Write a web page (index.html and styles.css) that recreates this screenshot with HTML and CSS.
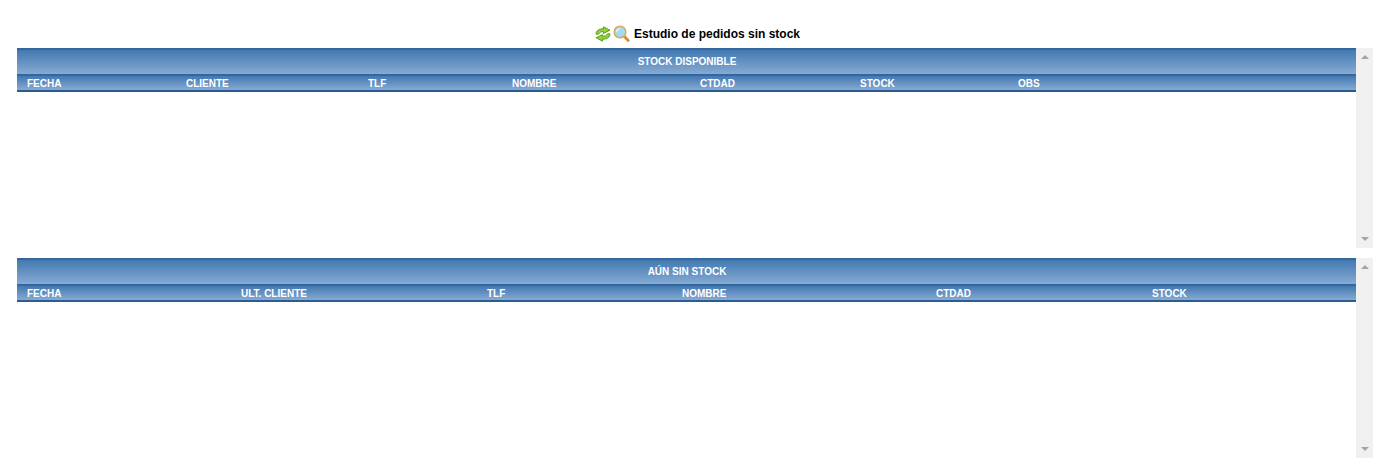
FILE: index.html
```html
<!DOCTYPE html>
<html lang="es">
<head>
<meta charset="utf-8">
<title>Estudio de pedidos sin stock</title>
<link rel="stylesheet" href="styles.css">
</head>
<body>
<div class="page">
  <h1 class="title">
    <svg class="icon" viewBox="0 0 16 16" width="16" height="16" aria-hidden="true">
      <path d="M1 8.2C1 4.8 3.8 2.6 8.5 2.8V.8L15 4.2 8.5 7.4V5.7C6 5.6 4.5 6.3 3.5 8.2Z" fill="#97d034" stroke="#4f9a1e" stroke-width=".9" stroke-linejoin="round"/>
      <path d="M15 7.8C15 11.2 12.2 13.4 7.5 13.2V15.2L1 11.8 7.5 8.6V10.3C10 10.4 11.5 9.7 12.5 7.8Z" fill="#97d034" stroke="#4f9a1e" stroke-width=".9" stroke-linejoin="round"/>
    </svg>
    <svg class="icon" viewBox="0 0 17 17" width="17" height="17" aria-hidden="true">
      <path d="M11.4 11.6 15.2 15.4" stroke="#d98a2b" stroke-width="2.8" stroke-linecap="round"/>
      <circle cx="7" cy="7" r="5.8" fill="#a6daf2" stroke="#dcaa58" stroke-width="1.5"/>
      <path d="M3.6 6.8C3.8 5 5.2 3.8 7 3.6" fill="none" stroke="#e9f8ff" stroke-width="1.3"/>
    </svg>
    <span class="title-text">Estudio de pedidos sin stock</span>
  </h1>

  <section class="panel">
    <div class="panel-main">
      <div class="band">STOCK DISPONIBLE</div>
      <div class="cols cols-stock">
        <span>FECHA</span><span>CLIENTE</span><span>TLF</span><span>NOMBRE</span><span>CTDAD</span><span>STOCK</span><span>OBS</span>
      </div>
    </div>
    <div class="scrollbar"><i class="arrow-up"></i><i class="arrow-down"></i></div>
  </section>

  <section class="panel">
    <div class="panel-main">
      <div class="band">AÚN SIN STOCK</div>
      <div class="cols cols-nostock">
        <span>FECHA</span><span>ULT. CLIENTE</span><span>TLF</span><span>NOMBRE</span><span>CTDAD</span><span>STOCK</span>
      </div>
    </div>
    <div class="scrollbar"><i class="arrow-up"></i><i class="arrow-down"></i></div>
  </section>
</div>
</body>
</html>
```
FILE: styles.css
```css
html, body {
  margin: 0;
  padding: 0;
  background: #fff;
}
body {
  font-family: "Liberation Sans", Arial, sans-serif;
}
.page {
  padding: 25px 23px 0 17px;
}
.title {
  margin: 0 -23px 6px -17px;
  height: 17px;
  display: flex;
  justify-content: center;
  align-items: center;
  gap: 2px;
  font-size: 12px;
  font-weight: bold;
  color: #000;
}
.title-text {
  margin: 0 1px 0 2px;
}
.icon {
  display: block;
  flex: none;
}
.panel {
  height: 200px;
  display: flex;
}
.panel + .panel {
  margin-top: 10px;
}
.panel-main {
  flex: 1;
  min-width: 0;
}
.band {
  height: 26px;
  box-sizing: border-box;
  display: flex;
  align-items: center;
  justify-content: center;
  padding: 0 0 1px 1px;
  border-top: 2px solid #33689f;
  background: linear-gradient(#4379b1, #86aad3);
  color: #fff;
  font-size: 10px;
  font-weight: bold;
}
.cols {
  height: 18px;
  box-sizing: border-box;
  display: grid;
  align-items: center;
  border-top: 2px solid #33689f;
  border-bottom: 2px solid #2a5d94;
  background: linear-gradient(#4379b1, #86aad3);
  color: #fff;
  font-size: 10px;
  font-weight: bold;
}
.cols span {
  padding-left: 10px;
}
.cols-stock {
  grid-template-columns: 159px 182px 144px 188px 160px 158px 1fr;
}
.cols-nostock {
  grid-template-columns: 214px 246px 195px 254px 216px 1fr;
}
.scrollbar {
  width: 17px;
  background: #f0f0f0;
  display: flex;
  flex-direction: column;
  justify-content: space-between;
  align-items: center;
  padding: 7px 0;
  box-sizing: border-box;
}
.arrow-up, .arrow-down {
  display: block;
  width: 0;
  height: 0;
  border-left: 4px solid transparent;
  border-right: 4px solid transparent;
}
.arrow-up {
  border-bottom: 4px solid #a3a3a3;
}
.arrow-down {
  border-top: 4px solid #a3a3a3;
}
```
